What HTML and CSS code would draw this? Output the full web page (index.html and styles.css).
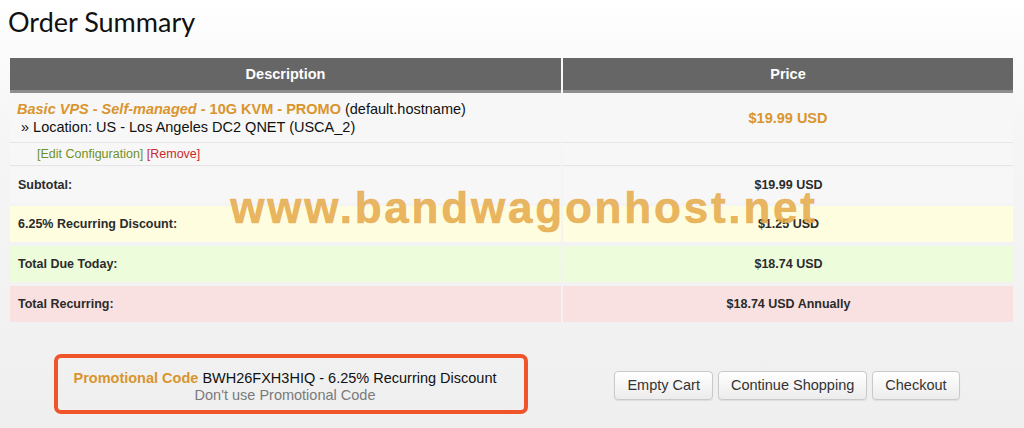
FILE: index.html
```html
<!DOCTYPE html>
<html lang="en">
<head>
    <meta charset="UTF-8">
    <meta name="viewport" content="width=device-width, initial-scale=1.0">
    <title>Order Summary</title>
    <link rel="stylesheet" href="styles.css">
</head>
<body>
    <h1 class="title">Order Summary</h1>
    <div class="cart">
        <table class="items">
            <thead>
                <tr>
                    <th class="col-desc">Description</th>
                    <th class="col-price">Price</th>
                </tr>
            </thead>
            <tbody>
                <tr class="product">
                    <td>
                        <span class="product-name"><em>Basic VPS - Self-managed</em> - 10G KVM - PROMO</span> (default.hostname)<br>
                        &nbsp;» Location: US - Los Angeles DC2 QNET (USCA_2)
                    </td>
                    <td class="amount product-price">$19.99 USD</td>
                </tr>
                <tr class="actions">
                    <td><a href="#" class="edit">[Edit Configuration]</a> <a href="#" class="remove">[Remove]</a></td>
                    <td></td>
                </tr>
                <tr class="total subtotal">
                    <td>Subtotal:</td>
                    <td class="amount">$19.99 USD</td>
                </tr>
                <tr class="total discount">
                    <td>6.25% Recurring Discount:</td>
                    <td class="amount">$1.25 USD</td>
                </tr>
                <tr class="total due">
                    <td>Total Due Today:</td>
                    <td class="amount">$18.74 USD</td>
                </tr>
                <tr class="total recurring">
                    <td>Total Recurring:</td>
                    <td class="amount">$18.74 USD Annually</td>
                </tr>
            </tbody>
        </table>
        <div class="watermark">www.bandwagonhost.net</div>
    </div>
    <div class="footer">
        <div class="promo-col">
            <div class="promo">
                <div class="promo-text">
                    <span class="promo-label">Promotional Code</span> BWH26FXH3HIQ - 6.25% Recurring Discount<br>
                    <a href="#" class="promo-remove">Don't use Promotional Code</a>
                </div>
            </div>
        </div>
        <div class="buttons">
            <button class="btn">Empty Cart</button>
            <button class="btn">Continue Shopping</button>
            <button class="btn">Checkout</button>
        </div>
    </div>
</body>
</html>
```

FILE: styles.css
```css
body {
    margin: 0;
    height: 428px;
    font-family: "Liberation Sans", Arial, sans-serif;
    font-size: 14.5px;
    color: #111;
    background: linear-gradient(#fff 0, #f6f6f6 120px, #efefef 100%);
    overflow: hidden;
}
.title {
    margin: 0;
    padding: 5px 0 0 8px;
    height: 58px;
    box-sizing: border-box;
    font-family: Lato, "Liberation Sans", sans-serif;
    font-weight: 400;
    font-size: 27px;
    color: #111;
}
.cart {
    position: relative;
}
.items {
    margin-left: 8px;
    width: 1007px;
    border-collapse: separate;
    border-spacing: 2px 0;
}
.items th {
    background-color: #666;
    color: #fff;
    font-size: 14.5px;
    font-weight: bold;
    height: 32px;
    padding: 0;
    border-bottom: 3px solid #8d8d8d;
}
.col-desc {
    width: 551px;
}
.items td {
    padding: 0 7px;
    background-color: #f7f7f7;
}
.product td {
    padding-top: 7px;
    padding-bottom: 6px;
    line-height: 18px;
    border-bottom: 1px solid #e6e6e6;
}
.product-name {
    color: #d9952e;
    font-weight: bold;
}
.amount {
    text-align: center;
}
.product-price {
    color: #d9952e;
    font-weight: bold;
}
.actions td {
    font-size: 12.5px;
    height: 22px;
    padding-left: 27px;
    border-bottom: 1px solid #e6e6e6;
}
.actions a {
    text-decoration: none;
}
.edit {
    color: #6f9128;
}
.remove {
    color: #cc2a2a;
}
.total td {
    height: 36px;
    padding-left: 8px;
    font-size: 12.5px;
    font-weight: bold;
    color: #2b2b2b;
    border-top: 4px solid transparent;
    background-clip: padding-box;
}
.subtotal td {
    border-top: 1px solid transparent;
}
.discount td {
    background-color: #fffde0;
    border-top-width: 3px;
}
.due td {
    background-color: #edfddc;
}
.recurring td {
    background-color: #f9e1e1;
}
.watermark {
    position: absolute;
    left: 24px;
    right: 0;
    top: 125px;
    text-align: center;
    font-family: "Liberation Sans", Arial, sans-serif;
    font-weight: bold;
    font-size: 44px;
    letter-spacing: 2.8px;
    color: rgba(230, 170, 72, 0.85);
    -webkit-text-stroke: 0.6px rgba(230, 170, 72, 0.85);
    pointer-events: none;
}
.footer {
    display: flex;
    margin-left: 10px;
    width: 1003px;
    padding-top: 32px;
}
.promo-col {
    width: 551px;
    display: flex;
    justify-content: center;
}
.promo {
    margin-left: 11px;
    width: 466px;
    height: 52px;
    border: 4px solid #f0542a;
    border-radius: 7px;
    display: flex;
    align-items: center;
    justify-content: center;
}
.promo-text {
    text-align: center;
    line-height: 17px;
    margin-right: 12px;
    margin-top: 5px;
}
.promo-label {
    color: #d9952e;
    font-weight: bold;
}
.promo-remove {
    color: #7a7a7a;
    text-decoration: none;
}
.buttons {
    flex: 1;
    display: flex;
    justify-content: center;
    align-items: center;
    gap: 5px;
    margin-top: 2px;
}
.btn {
    font-family: "Liberation Sans", Arial, sans-serif;
    font-size: 14.5px;
    color: #333;
    height: 29px;
    padding: 0 12px;
    border: 1px solid #c9c9c9;
    border-radius: 4px;
    background: linear-gradient(#fff, #ececec);
    box-shadow: 0 1px 1px rgba(0, 0, 0, 0.08);
}
```
